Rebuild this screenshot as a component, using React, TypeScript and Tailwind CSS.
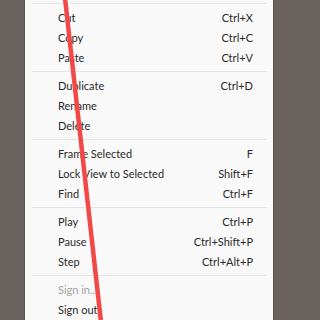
import React from 'react';

type Item = { label: string; shortcut?: string; disabled?: boolean } | 'sep';

const items: Item[] = [
  'sep',
  { label: 'Cut', shortcut: 'Ctrl+X' },
  { label: 'Copy', shortcut: 'Ctrl+C' },
  { label: 'Paste', shortcut: 'Ctrl+V' },
  'sep',
  { label: 'Duplicate', shortcut: 'Ctrl+D' },
  { label: 'Rename' },
  { label: 'Delete' },
  'sep',
  { label: 'Frame Selected', shortcut: 'F' },
  { label: 'Lock View to Selected', shortcut: 'Shift+F' },
  { label: 'Find', shortcut: 'Ctrl+F' },
  'sep',
  { label: 'Play', shortcut: 'Ctrl+P' },
  { label: 'Pause', shortcut: 'Ctrl+Shift+P' },
  { label: 'Step', shortcut: 'Ctrl+Alt+P' },
  'sep',
  { label: 'Sign in...', disabled: true },
  { label: 'Sign out' },
];

export default function App() {
  return (
    <div className="relative h-[320px] w-[320px] overflow-hidden bg-[#69625e]">
      <div
        className="ml-[24px] flex h-[320px] w-[250px] flex-col border-x border-[#57514d] bg-[#f9f9f9] text-[11px] text-[#2a2a2a]"
        style={{ fontFamily: 'Lato, "Noto Sans", sans-serif' }}
      >
        {items.map((it, i) =>
          it === 'sep' ? (
            <div key={i} className="h-[8px] shrink-0 pt-[3px] pl-[7px] pr-[6px]">
              <div className="h-px bg-[#e3e3e3]" />
            </div>
          ) : (
            <div
              key={i}
              className={`flex h-[20px] shrink-0 items-center justify-between pl-[33px] pr-[20px] ${
                it.disabled ? 'text-[#a3a3a3]' : ''
              }`}
            >
              <span>{it.label}</span>
              {it.shortcut && <span>{it.shortcut}</span>}
            </div>
          )
        )}
      </div>
      <svg className="pointer-events-none absolute inset-0" width="320" height="320">
        <line x1="65" y1="-2" x2="101" y2="322" stroke="#f24848" strokeWidth="4.5" strokeLinecap="round" />
      </svg>
    </div>
  );
}
